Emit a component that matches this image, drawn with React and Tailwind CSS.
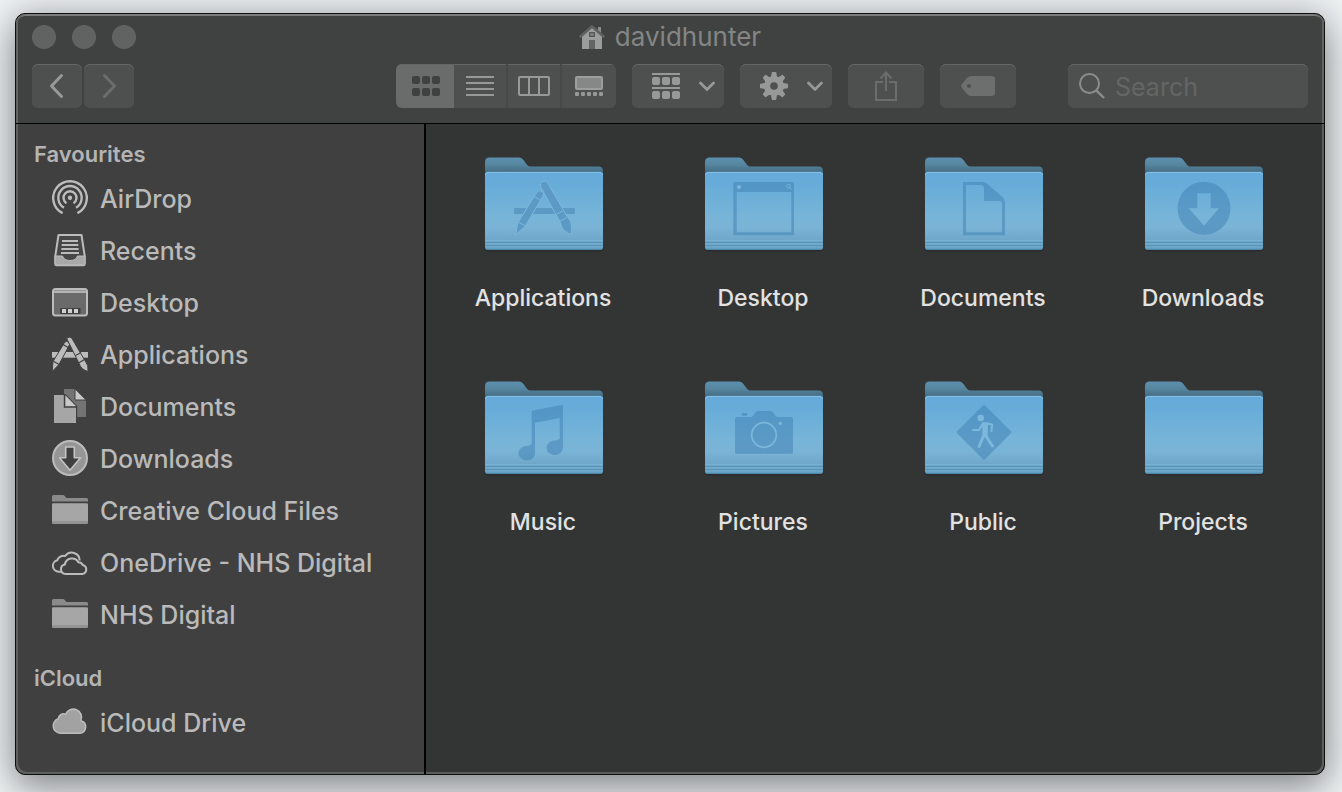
import React from "react";

/* ---------- toolbar icons ---------- */

function HomeIcon() {
  return (
    <svg width="26" height="26" viewBox="0 0 26 26" aria-hidden="true">
      <path d="M19 3h3v7h-3z" fill="#8a8c8b" />
      <path d="M3 11 13 3l10 8v14H3z" fill="#9b9d9c" />
      <path d="M1.500 12.500 13 2.500l11.500 10" fill="none" stroke="#606261" strokeWidth="2.600" strokeLinejoin="round" strokeLinecap="round" />
      <rect x="10" y="8" width="6" height="5" fill="#565857" />
      <rect x="11.500" y="9.500" width="3" height="2" fill="#8f9190" />
      <rect x="10" y="16" width="6" height="9" fill="#636564" />
    </svg>
  );
}

function GridIcon() {
  return (
    <svg width="28" height="20" viewBox="0 0 28 20" fill="#3f4140" aria-hidden="true">
      {[0, 12].map((y) =>
        [0, 10, 20].map((x) => <rect key={`${x}-${y}`} x={x} y={y} width="8" height="8" rx="2" />)
      )}
    </svg>
  );
}

function ListIcon() {
  return (
    <svg width="28" height="20" viewBox="0 0 28 20" fill="#979998" aria-hidden="true">
      {[0, 6, 12, 18].map((y) => <rect key={y} y={y} width="28" height="2" />)}
    </svg>
  );
}

function ColumnsIcon() {
  return (
    <svg width="32" height="20" viewBox="0 0 32 20" fill="none" stroke="#979998" strokeWidth="2" aria-hidden="true">
      <rect x="1" y="1" width="30" height="18" rx="1" />
      <path d="M11 1v18M21 1v18" />
    </svg>
  );
}

function GalleryIcon() {
  return (
    <svg width="28" height="20" viewBox="0 0 28 20" aria-hidden="true">
      <rect x="1" y="1" width="26" height="12" rx="1" fill="#868887" stroke="#9c9e9d" strokeWidth="2" />
      {[0, 6, 12, 18, 24].map((x) => <rect key={x} x={x} y="16" width="4" height="4" rx="1" fill="#979998" />)}
    </svg>
  );
}

function GroupIcon() {
  return (
    <svg width="28" height="26" viewBox="0 0 28 26" fill="#979998" aria-hidden="true">
      <rect width="28" height="2" />
      <rect y="14" width="28" height="2" />
      {[4, 18].map((y) =>
        [0, 10, 20].map((x) => <rect key={`${x}-${y}`} x={x} y={y} width="8" height="8" rx="2" />)
      )}
    </svg>
  );
}

function GearIcon() {
  return (
    <svg width="28" height="28" viewBox="0 0 28 28" aria-hidden="true">
      <g fill="#979998">
        {[0, 45, 90, 135, 180, 225, 270, 315].map((a) => (
          <path key={a} d="M10.800 6 11.800 0.500Q12 0 12.500 0h3Q16 0 16.200 0.500L17.200 6z" transform={`rotate(${a} 14 14)`} />
        ))}
        <circle cx="14" cy="14" r="10" />
      </g>
      <circle cx="14" cy="14" r="3.800" fill="#4e504f" />
    </svg>
  );
}

function DownChevron() {
  return (
    <svg width="16" height="10" viewBox="0 0 16 10" fill="none" stroke="#979998" strokeWidth="2.700" strokeLinecap="round" strokeLinejoin="round" aria-hidden="true">
      <path d="M1.500 2 8 8.500 14.500 2" />
    </svg>
  );
}

function ShareIcon() {
  return (
    <svg width="22" height="30" viewBox="0 0 22 30" fill="none" stroke="#6b6d6c" strokeWidth="2" aria-hidden="true">
      <path d="M8 11H1v18h20V11h-7M11 20V1.500M5.500 7.500 11 1.500l5.500 6" />
    </svg>
  );
}

function TagIcon() {
  return (
    <svg width="34" height="20" viewBox="0 0 34 20" aria-hidden="true">
      <path fillRule="evenodd" d="M10 0h21a3 3 0 0 1 3 3v14a3 3 0 0 1-3 3H10Q8 20 6.500 18.500L.8 11.800Q-.5 10 .8 8.200L6.500 1.500Q8 0 10 0ZM8 8a2 2 0 1 0 0 4 2 2 0 0 0 0-4Z" fill="#6d6f6e" />
    </svg>
  );
}

function SearchIcon() {
  return (
    <svg width="26" height="26" viewBox="0 0 26 26" fill="none" stroke="#8a8c8b" strokeWidth="2" aria-hidden="true" className="shrink-0">
      <circle cx="10.500" cy="10.500" r="9.500" />
      <path d="m17.300 17.300 7.700 7.700" strokeWidth="2.400" />
    </svg>
  );
}

/* ---------- sidebar icons ---------- */

function SideSvg({ children }) {
  return (
    <svg width="36" height="40" viewBox="0 0 36 40" aria-hidden="true" className="shrink-0">
      {children}
    </svg>
  );
}

const AirDropIcon = () => (
  <SideSvg>
    <g fill="none" stroke="#bcbcbc" strokeWidth="2.400">
      <path d="M10.600 34.100a16.800 16.800 0 1 1 14.800 0" />
      <path d="M12 28.800a11.700 11.700 0 1 1 12 0" />
      <path d="M14.500 24.200a6.500 6.500 0 1 1 7 0" />
    </g>
    <circle cx="18" cy="18.700" r="2.200" fill="#bcbcbc" />
  </SideSvg>
);

const RecentsIcon = () => (
  <SideSvg>
    <path d="M6.500 4h23l3.200 21v8a1.200 1.200 0 0 1-1.200 1.200h-27A1.200 1.200 0 0 1 3.300 33v-8z" fill="#474747" stroke="#bcbcbc" strokeWidth="2" strokeLinejoin="round" />
    <path d="M3 25h7.500q1.500 4.500 7.500 4.500t7.500-4.500H33v7.500Q33 34 31.500 34h-27Q3 34 3 32.500z" fill="#a9a9a9" stroke="#bcbcbc" />
    <path d="M10 10h16M9.700 14h16.600M9.400 18h17.200M9 22h18" stroke="#bcbcbc" strokeWidth="2" />
  </SideSvg>
);

const DesktopIcon = () => (
  <SideSvg>
    <rect x="1" y="6" width="34" height="26.500" rx="2.500" fill="#6a6a6a" stroke="#bcbcbc" strokeWidth="2" />
    <path d="M2 7h32v3H2z" fill="#969696" />
    <path d="M2 9h32" stroke="#bcbcbc" strokeWidth="1.500" />
    <rect x="8" y="25" width="20.500" height="6" fill="#404040" />
    <path d="M10 26h4v4h-4zM16 26h4v4h-4zM22 26h4v4h-4z" fill="#d0d0d0" />
  </SideSvg>
);

const ApplicationsIcon = () => (
  <SideSvg>
    <rect y="17" width="36" height="5.700" fill="#bcbcbc" />
    <g stroke="#404040" strokeWidth="1" fill="#bcbcbc">
      <path d="M12.700 7.200q2.200-1.800 4 .2l1 2L7 29.500.2 36.500 1 26.500z" />
      <path d="M14.700 3.500q2.400-2.800 5-.5l13.200 22.500q4 4.500 3.200 11-7-1.700-9-8z" />
    </g>
    <path d="m11 9.500 6 3.400M1.400 26.300l5.800 3.200M23.500 20.500l5.500-3M26.500 28l6-3.500" stroke="#404040" strokeWidth="1.200" />
  </SideSvg>
);

const DocumentsIcon = () => (
  <SideSvg>
    <path d="M12 2h10l12 12v16H12z" fill="#737373" />
    <path d="M23 1.800 34.200 13H23z" fill="#c8c8c8" stroke="#404040" strokeWidth="1" />
    <path d="M1 7h12.500L25.200 19v18H1z" fill="#404040" />
    <path d="M2 8h11l11 11.500V36H2z" fill="#a6a6a6" />
    <path d="M12.500 7.500V20h12.500" fill="none" stroke="#404040" strokeWidth="1.400" />
    <path d="M13.800 9 23.800 19h-10z" fill="#c8c8c8" />
  </SideSvg>
);

const DownloadsIcon = () => (
  <SideSvg>
    <circle cx="18" cy="19" r="17" fill="#969696" stroke="#bcbcbc" strokeWidth="2" />
    <path d="M13.700 8h8.600v10.800h6.200L18 31.200 7.500 18.800h6.200z" fill="#404040" stroke="#c4c4c4" strokeWidth="1.600" strokeLinejoin="round" />
  </SideSvg>
);

const FolderIcon = () => (
  <SideSvg>
    <path d="M0 10.500V5.500Q0 4 1.500 4H11q1 0 1.700 1l1 1.300q.5.700 1.300.7h19.500Q36 7 36 8.500v2z" fill="#8a8a8a" />
    <path d="M1.300 12.300h33.400q1.300 0 1.300 1.300v18q0 1.200-1.300 1.200H1.300Q0 32.800 0 31.600v-18q0-1.300 1.300-1.300z" fill="#a6a6a6" />
    <path d="M0 30h36v1.600q0 1.200-1.300 1.200H1.300Q0 32.800 0 31.600z" fill="#949494" />
  </SideSvg>
);

const OneDriveIcon = () => (
  <SideSvg>
    <g fill="none" stroke="#bcbcbc" strokeWidth="2" strokeLinejoin="round">
      <path d="M9.500 28.700H6.800a5.800 5.800 0 0 1-1.600-11.400 6.800 6.800 0 0 1 8-4.300 8 8 0 0 1 14.500 4.500" />
      <path d="M13.500 31a4.800 4.800 0 0 1-.6-9.500 7.200 7.200 0 0 1 13.500-2.200 5 5 0 0 1 4.300 2.700 4.600 4.600 0 0 1-.2 9z" fill="#404040" />
    </g>
  </SideSvg>
);

const CloudIcon = () => (
  <SideSvg>
    <path d="M8.200 30.200a7.400 7.400 0 0 1-1.900-14.400 5.200 5.200 0 0 1 7.300-4.600 8.200 8.200 0 0 1 15.300 6.500 6.400 6.400 0 0 1-.7 12.500z" fill="#a2a2a2" stroke="#bcbcbc" strokeWidth="1.600" />
  </SideSvg>
);

/* ---------- folder artwork ---------- */

const INK = "#3c7db2";
const PAPER = "#7cb8dc";

const glyphs = {
  Applications: (
    <g fill="#5c9ac5">
      <rect x="31" y="52" width="60.700" height="6" />
      <g stroke={PAPER} strokeWidth="1">
        <path d="M53.300 37q1.500-3.500 5-2 3.300 1.800 1.800 5L42 70.500 32.500 78.800 35 66.500z" />
        <path d="M57.500 30.500q-1-3.500 2-5t5 1L82.500 58q1 2.500 3 4.500 4 3.500 2.800 16-8.500-3.500-10-8.500-.3-3-2-5.500z" />
        <path d="m51.300 40.500 7 4M35.500 66l7 4M72.500 59l7-4M76.500 65.500l7-4" fill="none" />
      </g>
    </g>
  ),
  Desktop: (
    <g>
      <path fillRule="evenodd" d="M32 26h57.500q1.500 0 1.500 1.500V78q0 1.300-1.500 1.300H32q-1.700 0-1.700-1.300V27.500Q30.300 26 32 26ZM33.700 36v40.300h54.600V36z" fill={INK} fillOpacity="0.480" />
      <circle cx="36" cy="31" r="2" fill={PAPER} />
      <circle cx="85.500" cy="30.200" r="1.800" fill="none" stroke={PAPER} strokeWidth=".8" />
      <path d="m87 31.700 1.500 1.800" stroke={PAPER} strokeWidth=".8" />
    </g>
  ),
  Documents: (
    <path fillRule="evenodd" d="M40 26h20q2 0 3.500 1.300L79.500 41q2.500 2.300 2.500 5v33.300H40zM43 29v47.300h36V48q0-3-3-3H61V32q0-3-3-3z" fill={INK} fillOpacity="0.480" />
  ),
  Downloads: (
    <path fillRule="evenodd" d="M61 25.800a26.500 26.500 0 1 0 0 53 26.500 26.500 0 0 0 0-53ZM54.300 37.300h13.400v15H76L61 69.700 45.700 52.300h8.600z" fill={INK} fillOpacity="0.480" />
  ),
  Music: (
    <path d="M49.700 30.500 79 25q1 0 1 1v41.500a8.300 7.200 0 1 1-8.300-7q3 0 5-1.800V38L52 42.700V73a8.300 7.200 0 1 1-8.300-7q3.500 0 5-2V31.500q0-.8 1-1z" fill={INK} fillOpacity="0.480" />
  ),
  Pictures: (
    <g>
      <path d="M34 37h13.500q1.500 0 2.500-1.200l2.500-3.400Q53.500 31 55 31h12.500q1.500 0 2.500 1.400l2.500 3.400q1 1.200 2.500 1.200h13q2 0 2 2v32.700q0 2-2 2H34q-2 0-2-2V39q0-2 2-2z" fill={INK} fillOpacity="0.480" />
      <rect x="38.700" y="33" width="5.500" height="2.700" rx="1" fill={INK} fillOpacity="0.500" />
      <circle cx="61" cy="55" r="12.300" fill="none" stroke={PAPER} strokeWidth="1.700" />
      <circle cx="77.300" cy="43.300" r="1.600" fill={PAPER} />
    </g>
  ),
  Public: (
    <g>
      <path d="M60 25.400q1-.8 2 0L88 51.300q1 1 0 2L62 79.200q-1 .8-2 0L34 53.300q-1-1 0-2z" fill={INK} fillOpacity="0.480" />
      <g fill="none" stroke={PAPER} strokeLinecap="round" strokeLinejoin="round">
        <circle cx="57.700" cy="38" r="3.300" fill={PAPER} stroke="none" />
        <path d="M60.500 43.500h3.300l-.5 11.500h-2.600z" fill={PAPER} strokeWidth="2.500" />
        <path d="M60 43.500 56 50h-6M64 43.500l5 1-.5 6.500" strokeWidth="2.200" />
        <path d="m61 55-2.500 5.500-2.500 6M62.500 55l3 5 4 6" strokeWidth="3" />
      </g>
    </g>
  ),
  Projects: null,
};

function FolderArt({ name }) {
  return (
    <svg width="120" height="100" viewBox="0 0 120 100" aria-hidden="true">
      <path d="M2 93V6q0-4.500 4.500-4.500H36q2.500 0 4 2l4 5.300q1 1.700 3 1.700h68.500Q120 10.500 120 15v78z" fill="url(#folder-back)" />
      <rect x="2" y="17" width="118" height="78.500" rx="3" fill="#1f2224" fillOpacity="0.500" />
      <rect x="2" y="16" width="118" height="78" rx="3" fill="url(#folder-front)" />
      <path d="M2.500 19q0-2.700 3-2.700h111q3 0 3 2.700" fill="none" stroke="#90cbee" strokeOpacity="0.800" />
      <path d="M2 84.500h118M2 88h118M2 91h118" stroke="#80bcda" strokeOpacity="0.550" />
      <path d="M2 86.500h118M2 89.500h118" stroke="#4f8cae" strokeOpacity="0.600" />
      <path d="M3 93.500h116" stroke="#4a84a8" strokeOpacity="0.800" />
      {glyphs[name]}
    </svg>
  );
}

function FolderGradients() {
  return (
    <svg width="0" height="0" className="absolute" aria-hidden="true">
      <defs>
        <linearGradient id="folder-back" x1="0" y1="0" x2="0" y2="1">
          <stop offset="0" stopColor="#5d8fae" />
          <stop offset="0.080" stopColor="#56869f" />
          <stop offset="0.170" stopColor="#41687f" />
          <stop offset="1" stopColor="#41687f" />
        </linearGradient>
        <linearGradient id="folder-front" x1="0" y1="0" x2="0" y2="1">
          <stop offset="0" stopColor="#65aad9" />
          <stop offset="0.200" stopColor="#68add9" />
          <stop offset="0.550" stopColor="#77b4d8" />
          <stop offset="0.700" stopColor="#7ab4d6" />
          <stop offset="0.860" stopColor="#70a8cb" />
          <stop offset="1" stopColor="#609cbe" />
        </linearGradient>
      </defs>
    </svg>
  );
}

/* ---------- data ---------- */

const sections = [
  {
    title: "Favourites",
    items: [
      ["AirDrop", AirDropIcon],
      ["Recents", RecentsIcon],
      ["Desktop", DesktopIcon],
      ["Applications", ApplicationsIcon],
      ["Documents", DocumentsIcon],
      ["Downloads", DownloadsIcon],
      ["Creative Cloud Files", FolderIcon],
      ["OneDrive - NHS Digital", OneDriveIcon],
      ["NHS Digital", FolderIcon],
    ],
  },
  { title: "iCloud", items: [["iCloud Drive", CloudIcon]] },
];

const folders = ["Applications", "Desktop", "Documents", "Downloads", "Music", "Pictures", "Public", "Projects"];

const views = [
  ["Icons", GridIcon],
  ["List", ListIcon],
  ["Columns", ColumnsIcon],
  ["Gallery", GalleryIcon],
];

/* ---------- pieces ---------- */

function ToolButton({ label, className, children, ...rest }) {
  return (
    <button
      type="button"
      aria-label={label}
      className={`flex h-11 items-center rounded-md bg-[#4e504f] shadow-[inset_0_1px_0_#646665] ${className}`}
      {...rest}
    >
      {children}
    </button>
  );
}

function Toolbar() {
  const [view, setView] = React.useState("Icons");
  return (
    <div className="flex items-center">
      <div className="flex gap-0.5">
        <ToolButton label="Back" className="w-[50px] justify-center">
          <svg width="16" height="26" viewBox="0 0 16 26" fill="none" stroke="#979998" strokeWidth="3" strokeLinecap="round" strokeLinejoin="round" aria-hidden="true">
            <path d="M12.500 2.500 2.500 13l10 10.500" />
          </svg>
        </ToolButton>
        <ToolButton label="Forward" className="w-[50px] justify-center">
          <svg width="16" height="26" viewBox="0 0 16 26" fill="none" stroke="#6b6d6c" strokeWidth="3" strokeLinecap="round" strokeLinejoin="round" aria-hidden="true">
            <path d="m3.500 2.500 10 10.500-10 10.500" />
          </svg>
        </ToolButton>
      </div>

      <div className="mr-[52px] ml-auto flex gap-4">
        <div role="group" aria-label="View" className="flex h-11 overflow-hidden rounded-md bg-[#4e504f]">
          {views.map(([name, Icon]) => (
            <button
              key={name}
              type="button"
              aria-label={`${name} view`}
              aria-pressed={view === name}
              onClick={() => setView(name)}
              className={`flex w-[54px] items-center justify-center border-r-2 border-[#474948] shadow-[inset_0_1px_0_#646665] first:w-[58px] first:border-r-0 first:pl-0.5 last:border-r-0 ${
                view === name ? "bg-[#6a6c6b]" : ""
              }`}
            >
              <Icon />
            </button>
          ))}
        </div>
        <ToolButton label="Group items" aria-haspopup="menu" className="w-[92px] justify-between pr-[9px] pl-5">
          <GroupIcon />
          <DownChevron />
        </ToolButton>
        <ToolButton label="Actions" aria-haspopup="menu" className="w-[92px] justify-between pr-[9px] pl-5">
          <GearIcon />
          <DownChevron />
        </ToolButton>
        <ToolButton label="Share" className="w-[76px] justify-center">
          <ShareIcon />
        </ToolButton>
        <ToolButton label="Edit tags" className="w-[76px] justify-center">
          <TagIcon />
        </ToolButton>
      </div>

      <label className="flex h-11 w-60 items-center gap-2.5 rounded-md bg-[#4e504f] pl-[11px] shadow-[inset_0_1px_0_#646665]">
        <SearchIcon />
        <input
          type="search"
          aria-label="Search"
          placeholder="Search"
          className="h-full w-full min-w-0 bg-transparent pt-0.5 text-[25px] text-[#bfbfbf] outline-none placeholder:text-[#646665]"
        />
      </label>
    </div>
  );
}

export default function App() {
  return (
    <div className="flex min-h-screen flex-col overflow-hidden bg-[#eef2f3] pt-[13px] pr-[17px] pb-[17px] pl-[15px] font-['Inter','Liberation_Sans',sans-serif]">
      <FolderGradients />
      <div className="flex flex-1 flex-col overflow-hidden rounded-[10px] border border-[#0d0f0f] bg-[#333534] shadow-[0_14px_36px_rgba(0,0,0,0.34),0_0_36px_rgba(20,20,30,0.22)]">
        <header className="rounded-t-[9px] border-b border-black bg-[#404241] px-4 pt-2.5 pb-[15px] shadow-[inset_2px_0_0_#636564,inset_-2px_0_0_#636564,inset_0_2px_0_#7b7e7d]">
          <div className="mb-4 grid h-6 grid-cols-3 items-center">
            <div className="flex gap-4">
              {["Close", "Minimise", "Zoom"].map((name) => (
                <button key={name} type="button" aria-label={name} className="size-6 rounded-full bg-[#616362]" />
              ))}
            </div>
            <h1 className="flex items-center justify-center gap-2.5 text-[26px] leading-6 text-[#848685]">
              <HomeIcon />
              davidhunter
            </h1>
          </div>
          <Toolbar />
        </header>

        <div className="flex flex-1">
          <nav className="w-[410px] shrink-0 rounded-bl-[9px] border-r-2 border-black bg-[#404040] pt-[11px] pb-6 shadow-[inset_2px_-2px_0_#5f6161]">
            {sections.map(({ title, items }) => (
              <section key={title} className="mb-[18px] last:mb-0">
                <h2 className="flex h-[38px] items-center pl-[18px] text-[22px] font-semibold text-[#b4b4b4]">{title}</h2>
                <ul>
                  {items.map(([name, Icon]) => (
                    <li key={name}>
                      <a href="#" className="flex h-[52px] items-center gap-3 pl-9 text-[25px] font-medium whitespace-nowrap text-[#bababa]">
                        <Icon />
                        <span className="pt-0.5">{name}</span>
                      </a>
                    </li>
                  ))}
                </ul>
              </section>
            ))}
          </nav>

          <main className="flex-1 rounded-br-[9px] px-[7px] pt-8 shadow-[inset_-2px_-2px_0_#5b5d5c]">
            <ul className="grid grid-cols-[repeat(auto-fill,220px)] auto-rows-[224px]">
              {folders.map((name) => (
                <li key={name} className="flex justify-center">
                  <button type="button" className="flex flex-col items-center gap-7 self-start text-[23px] leading-7 font-medium text-[#e2e2e2]">
                    <FolderArt name={name} />
                    {name}
                  </button>
                </li>
              ))}
            </ul>
          </main>
        </div>
      </div>
    </div>
  );
}
